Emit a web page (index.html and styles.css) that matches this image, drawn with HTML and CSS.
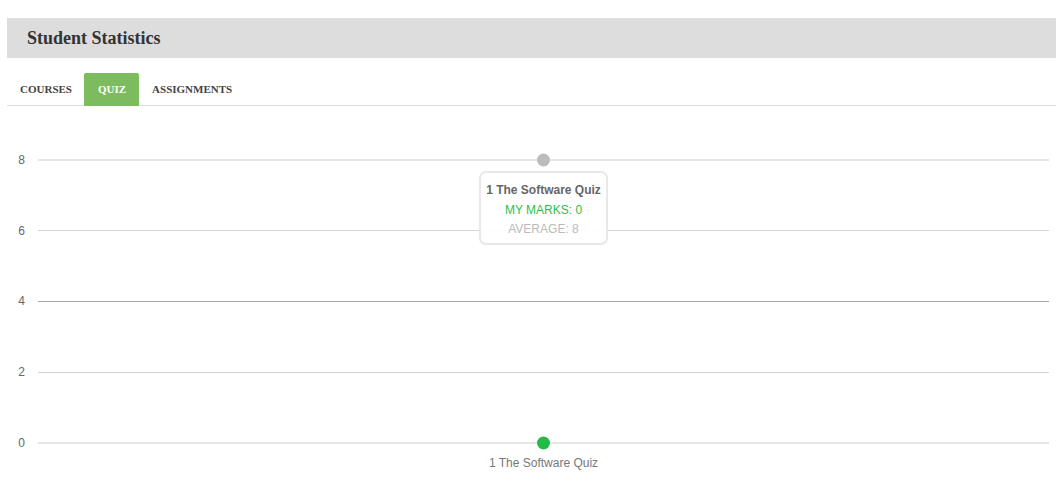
FILE: index.html
```html
<!DOCTYPE html>
<html>
<head>
<meta charset="utf-8">
<link rel="stylesheet" href="styles.css">
</head>
<body>
<div class="panel">
  <div class="header">Student Statistics</div>
  <div class="tabs">
    <div class="tab">Courses</div>
    <div class="tab active">Quiz</div>
    <div class="tab">Assignments</div>
  </div>
</div>
<div class="chart">
  <svg class="plot" width="1056" height="378" viewBox="0 0 1056 378">
    <g class="grid">
      <line x1="38" y1="54" x2="1049" y2="54" stroke="#e6e6e6" stroke-width="2"/>
      <line x1="38" y1="124.5" x2="1049" y2="124.5" stroke="#d4d4d4" stroke-width="1"/>
      <line x1="38" y1="195.5" x2="1049" y2="195.5" stroke="#a8a8a8" stroke-width="1"/>
      <line x1="38" y1="266.5" x2="1049" y2="266.5" stroke="#d4d4d4" stroke-width="1"/>
      <line x1="38" y1="337" x2="1049" y2="337" stroke="#e6e6e6" stroke-width="2"/>
    </g>
    <g class="ylabels">
      <text x="25" y="58">8</text>
      <text x="25" y="129">6</text>
      <text x="25" y="199">4</text>
      <text x="25" y="270">2</text>
      <text x="25" y="341">0</text>
    </g>
    <circle cx="543.5" cy="54" r="6.5" fill="#bcbcbc"/>
    <circle cx="543.5" cy="337" r="6.5" fill="#22bb47"/>
    <text class="xlabel" x="543.5" y="361">1 The Software Quiz</text>
  </svg>
  <div class="tooltip">
    <div class="tt-title">1 The Software Quiz</div>
    <div class="tt-mine">MY MARKS: 0</div>
    <div class="tt-avg">AVERAGE: 8</div>
  </div>
</div>
</body>
</html>
```
FILE: styles.css
```css
html, body {
  margin: 0;
  padding: 0;
  background: #fff;
}
.panel {
  padding-top: 18px;
  padding-left: 7px;
}
.header {
  height: 40px;
  line-height: 40px;
  background: #dddddd;
  padding-left: 20px;
  font-family: "Liberation Serif", serif;
  font-weight: bold;
  font-size: 18px;
  color: #333;
}
.tabs {
  margin-top: 15px;
  display: flex;
  height: 32px;
  border-bottom: 1px solid #dddddd;
}
.tab {
  padding: 0 13px;
  height: 32px;
  line-height: 32px;
  font-family: "Liberation Serif", serif;
  font-weight: bold;
  font-size: 11px;
  text-transform: uppercase;
  color: #444;
}
.tab.active {
  background: #7cbb5e;
  color: #fff;
  border-radius: 2px 2px 0 0;
  height: 33px;
  padding: 0 13px 0 14px;
  margin-left: -1px;
}
.chart {
  position: relative;
  height: 378px;
}
.plot {
  display: block;
}
.ylabels text {
  font-family: "Liberation Sans", Arial, sans-serif;
  font-size: 12px;
  fill: #666;
  text-anchor: end;
}
.xlabel {
  font-family: "Liberation Sans", Arial, sans-serif;
  font-size: 12px;
  fill: #777;
  text-anchor: middle;
}
.tooltip {
  position: absolute;
  left: 479px;
  top: 65px;
  width: 125px;
  height: 62px;
  border: 2px solid #e8e8e8;
  border-radius: 7px;
  background: rgba(255, 255, 255, 0.92);
  font-family: "Liberation Sans", Arial, sans-serif;
  font-size: 12px;
  text-align: center;
  padding-top: 8px;
  box-sizing: content-box;
}
.tooltip div {
  line-height: 19.5px;
}
.tt-title {
  font-weight: bold;
  color: #666;
}
.tt-mine {
  color: #2cbf4c;
}
.tt-avg {
  color: #bbbbbb;
}
```
